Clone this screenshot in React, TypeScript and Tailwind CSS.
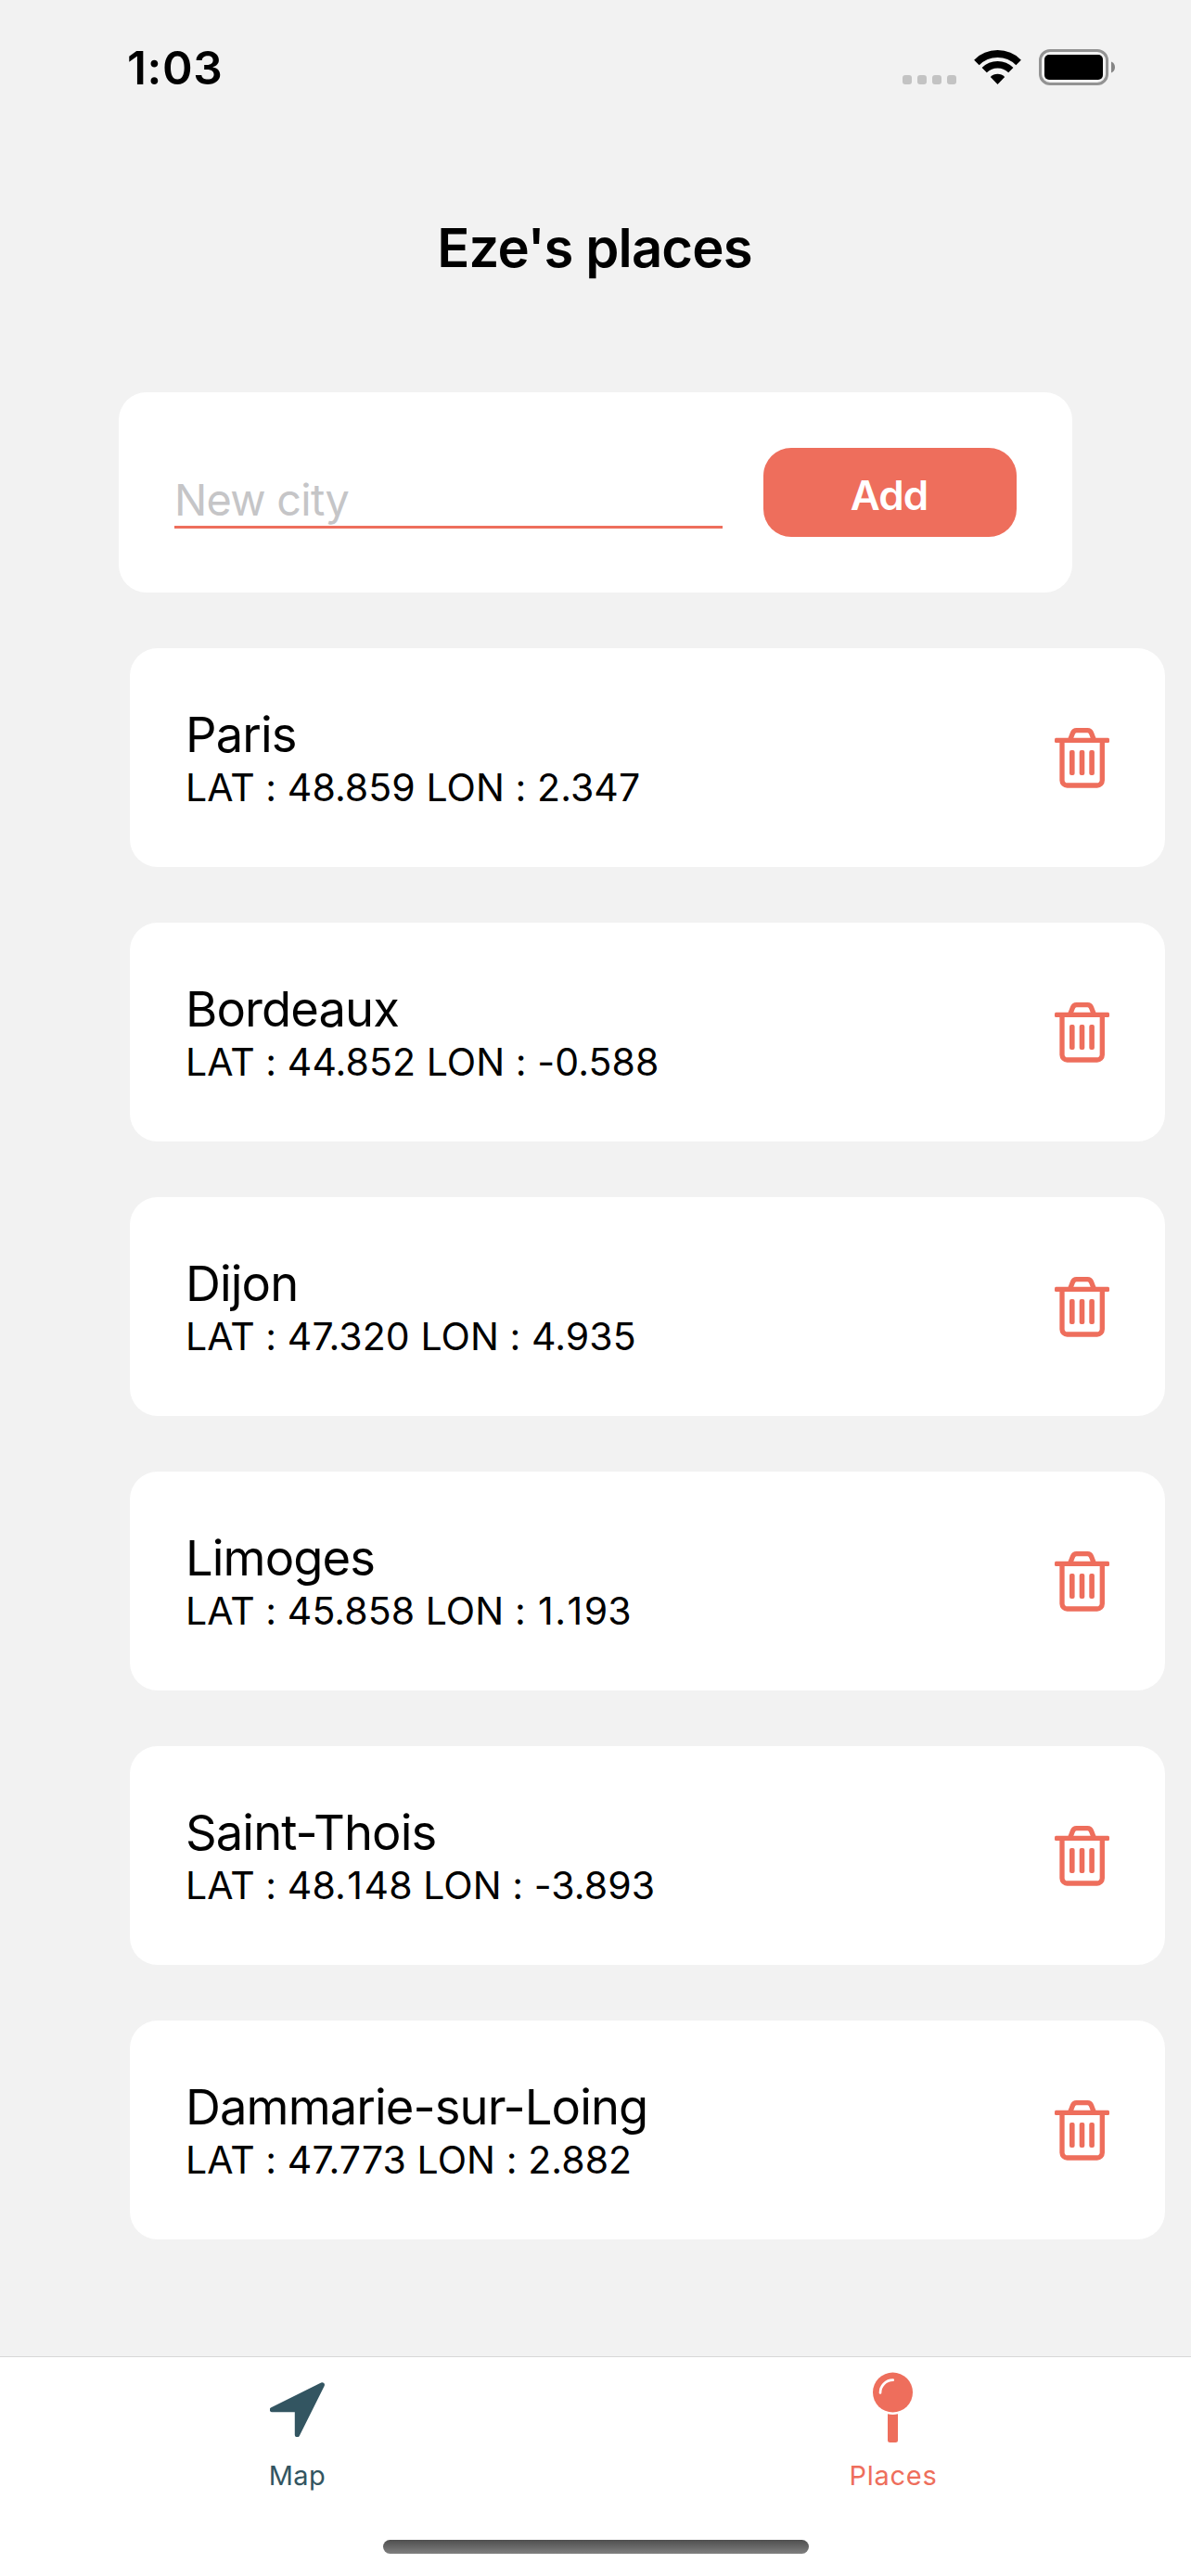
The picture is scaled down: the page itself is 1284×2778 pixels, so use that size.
import type { ReactNode } from 'react';

type Place = { name: string; lat: string; lon: string };

const places: Place[] = [
  { name: 'Paris', lat: '48.859', lon: '2.347' },
  { name: 'Bordeaux', lat: '44.852', lon: '-0.588' },
  { name: 'Dijon', lat: '47.320', lon: '4.935' },
  { name: 'Limoges', lat: '45.858', lon: '1.193' },
  { name: 'Saint-Thois', lat: '48.148', lon: '-3.893' },
  { name: 'Dammarie-sur-Loing', lat: '47.773', lon: '2.882' },
];

function WifiIcon() {
  return (
    <svg className="h-[37px] w-[51px]" viewBox="0 0 51 37" fill="none">
      <path d="M2.9 13.4A31.9 31.9 0 0 1 48.1 13.4" stroke="#000" strokeWidth="7.8" />
      <path d="M11.2 21.7A20.2 20.2 0 0 1 39.8 21.7" stroke="#000" strokeWidth="7.4" />
      <path d="M25.5 37L17.8 29.1A10.7 10.7 0 0 1 33.2 29.1Z" fill="#000" />
    </svg>
  );
}

function BatteryIcon() {
  return (
    <svg className="h-[39px] w-[83px]" viewBox="0 0 83 39" fill="none">
      <rect x="1.5" y="1.5" width="72" height="36" rx="10.5" stroke="#939393" strokeWidth="3" />
      <rect x="6" y="6" width="63" height="27" rx="5" fill="#000" />
      <path d="M78 13.5C80.600 14.300 82 16.800 82 19.500S80.600 24.700 78 25.500Z" fill="#858585" />
    </svg>
  );
}

function StatusBar() {
  return (
    <header className="flex h-[146px] shrink-0 items-center justify-between pr-[81px] pl-[137px]">
      <span className="text-[49.5px] leading-[60px] font-semibold tracking-[0.6px]">1:03</span>
      <div className="mb-px flex items-center">
        <div className="mt-[27px] mr-[19px] flex gap-1.5">
          {[0, 1, 2, 3].map((dot) => (
            <span key={dot} className="size-2.5 rounded-[3px] bg-[#c3c3c3]" />
          ))}
        </div>
        <WifiIcon />
        <div className="ml-[19px]">
          <BatteryIcon />
        </div>
      </div>
    </header>
  );
}

function TrashIcon() {
  return (
    <svg className="h-[66px] w-[59px]" viewBox="0 0 59 66" fill="none">
      <path
        d="M17 13L19.300 7Q20.500 3.700 23.500 3.700H35.500Q38.500 3.700 39.700 7L42 13M8 15V57.500A5.500 5.500 0 0 0 13.500 63H45.800A5.500 5.500 0 0 0 51.300 57.500V15"
        stroke="#ee6e5c"
        strokeWidth="5.3"
      />
      <g fill="#ee6e5c">
        <rect y="11.700" width="59" height="5.300" rx="1.500" />
        <rect x="16" y="25" width="5.600" height="27" rx="2" />
        <rect x="26.700" y="25" width="5.600" height="27" rx="2" />
        <rect x="37.300" y="25" width="5.600" height="27" rx="2" />
      </g>
    </svg>
  );
}

/** Gives the narrow digit 1 some extra room on both sides. */
function Coordinate({ value }: { value: string }) {
  return value.split(/(1)/).map((part, index) =>
    part === '1' ? (
      <span key={index} className="px-[1.5px]">
        1
      </span>
    ) : (
      part
    ),
  );
}

function PlaceCard({ place }: { place: Place }) {
  return (
    <li className="flex h-[236px] items-center justify-between rounded-[30px] bg-white px-[60px]">
      <div>
        <p className="text-[52.5px] leading-[64px] tracking-[-0.9px]">{place.name}</p>
        <p className="text-[41px] leading-[50px] tracking-[0.08px]">
          LAT : <Coordinate value={place.lat} /> LON : <Coordinate value={place.lon} />
        </p>
      </div>
      <button type="button" aria-label={`Delete ${place.name}`}>
        <TrashIcon />
      </button>
    </li>
  );
}

function MapIcon() {
  return (
    <svg className="size-[59px]" viewBox="0 0 59 59" fill="#335561">
      <path d="M26.800 32.300H2.600A2.600 2.600 0 0 1 1.400 27.300L55.200 .4A2.700 2.700 0 0 1 58.700 4L32 57.600A2.700 2.700 0 0 1 26.800 56.400Z" />
    </svg>
  );
}

function PinIcon() {
  return (
    <svg className="h-[76px] w-[43px]" viewBox="0 0 43 76" fill="none">
      <circle cx="21.5" cy="22" r="21.5" fill="#ee6e5c" />
      <path d="M8 22.500A13.700 13.700 0 0 1 21.700 8.700" stroke="#fff" strokeWidth="2.700" strokeLinecap="round" />
      <path d="M16 45.300Q21.500 46.600 27 45.300V73.500A2.500 2.500 0 0 1 24.500 76H18.500A2.500 2.500 0 0 1 16 73.500Z" fill="#ee6e5c" />
    </svg>
  );
}

function Tab({ icon, children }: { icon: ReactNode; children: ReactNode }) {
  return (
    <a className="flex flex-1 flex-col items-center pt-[15px]">
      <span className="mr-px flex h-[78px] items-center justify-center">{icon}</span>
      {children}
    </a>
  );
}

export default function App() {
  return (
    <div className="flex h-[2778px] w-[1284px] flex-col overflow-hidden bg-[#f2f2f2] font-['Inter',sans-serif] text-black">
      <StatusBar />
      <h1 className="mt-[86px] pr-[2px] text-center text-[58px] leading-[70px] font-semibold tracking-[-0.88px]">Eze's places</h1>

      <form className="mx-32 mt-[121px] flex h-[216px] shrink-0 items-end justify-between rounded-[30px] bg-white p-[60px]">
        <input
          className="mb-[9px] h-[59px] w-[591px] border-b-[3px] border-[#ee6e5c] text-[46.8px] tracking-[-0.72px] outline-none placeholder:text-[#c5c5c7]"
          placeholder="New city"
        />
        <button
          type="button"
          className="h-24 w-[273px] rounded-[30px] bg-[#ee6e5c] pt-[6px] pr-[2px] text-[44px] font-semibold tracking-[-0.9px] text-white"
        >
          Add
        </button>
      </form>

      <ul className="mt-[60px] mr-7 ml-[140px] flex flex-1 flex-col gap-[60px]">
        {places.map((place) => (
          <PlaceCard key={place.name} place={place} />
        ))}
      </ul>

      <nav className="flex h-[237px] shrink-0 flex-col border-t border-[#d8d8d8] bg-white">
        <div className="flex flex-1">
          <Tab icon={<span className="mt-[5px]"><MapIcon /></span>}>
            <span className="mt-[17px] mr-px text-[29px] leading-9 tracking-[0.5px] text-[#335561]">Map</span>
          </Tab>
          <Tab icon={<PinIcon />}>
            <span className="mt-[17px] text-[29px] leading-9 tracking-[0.7px] text-[#ee6e5c]">Places</span>
          </Tab>
        </div>
        <div className="mb-6 h-[15px] w-[459px] self-center rounded-full bg-linear-to-b from-[#4f4f4f] to-[#808080]" />
      </nav>
    </div>
  );
}
